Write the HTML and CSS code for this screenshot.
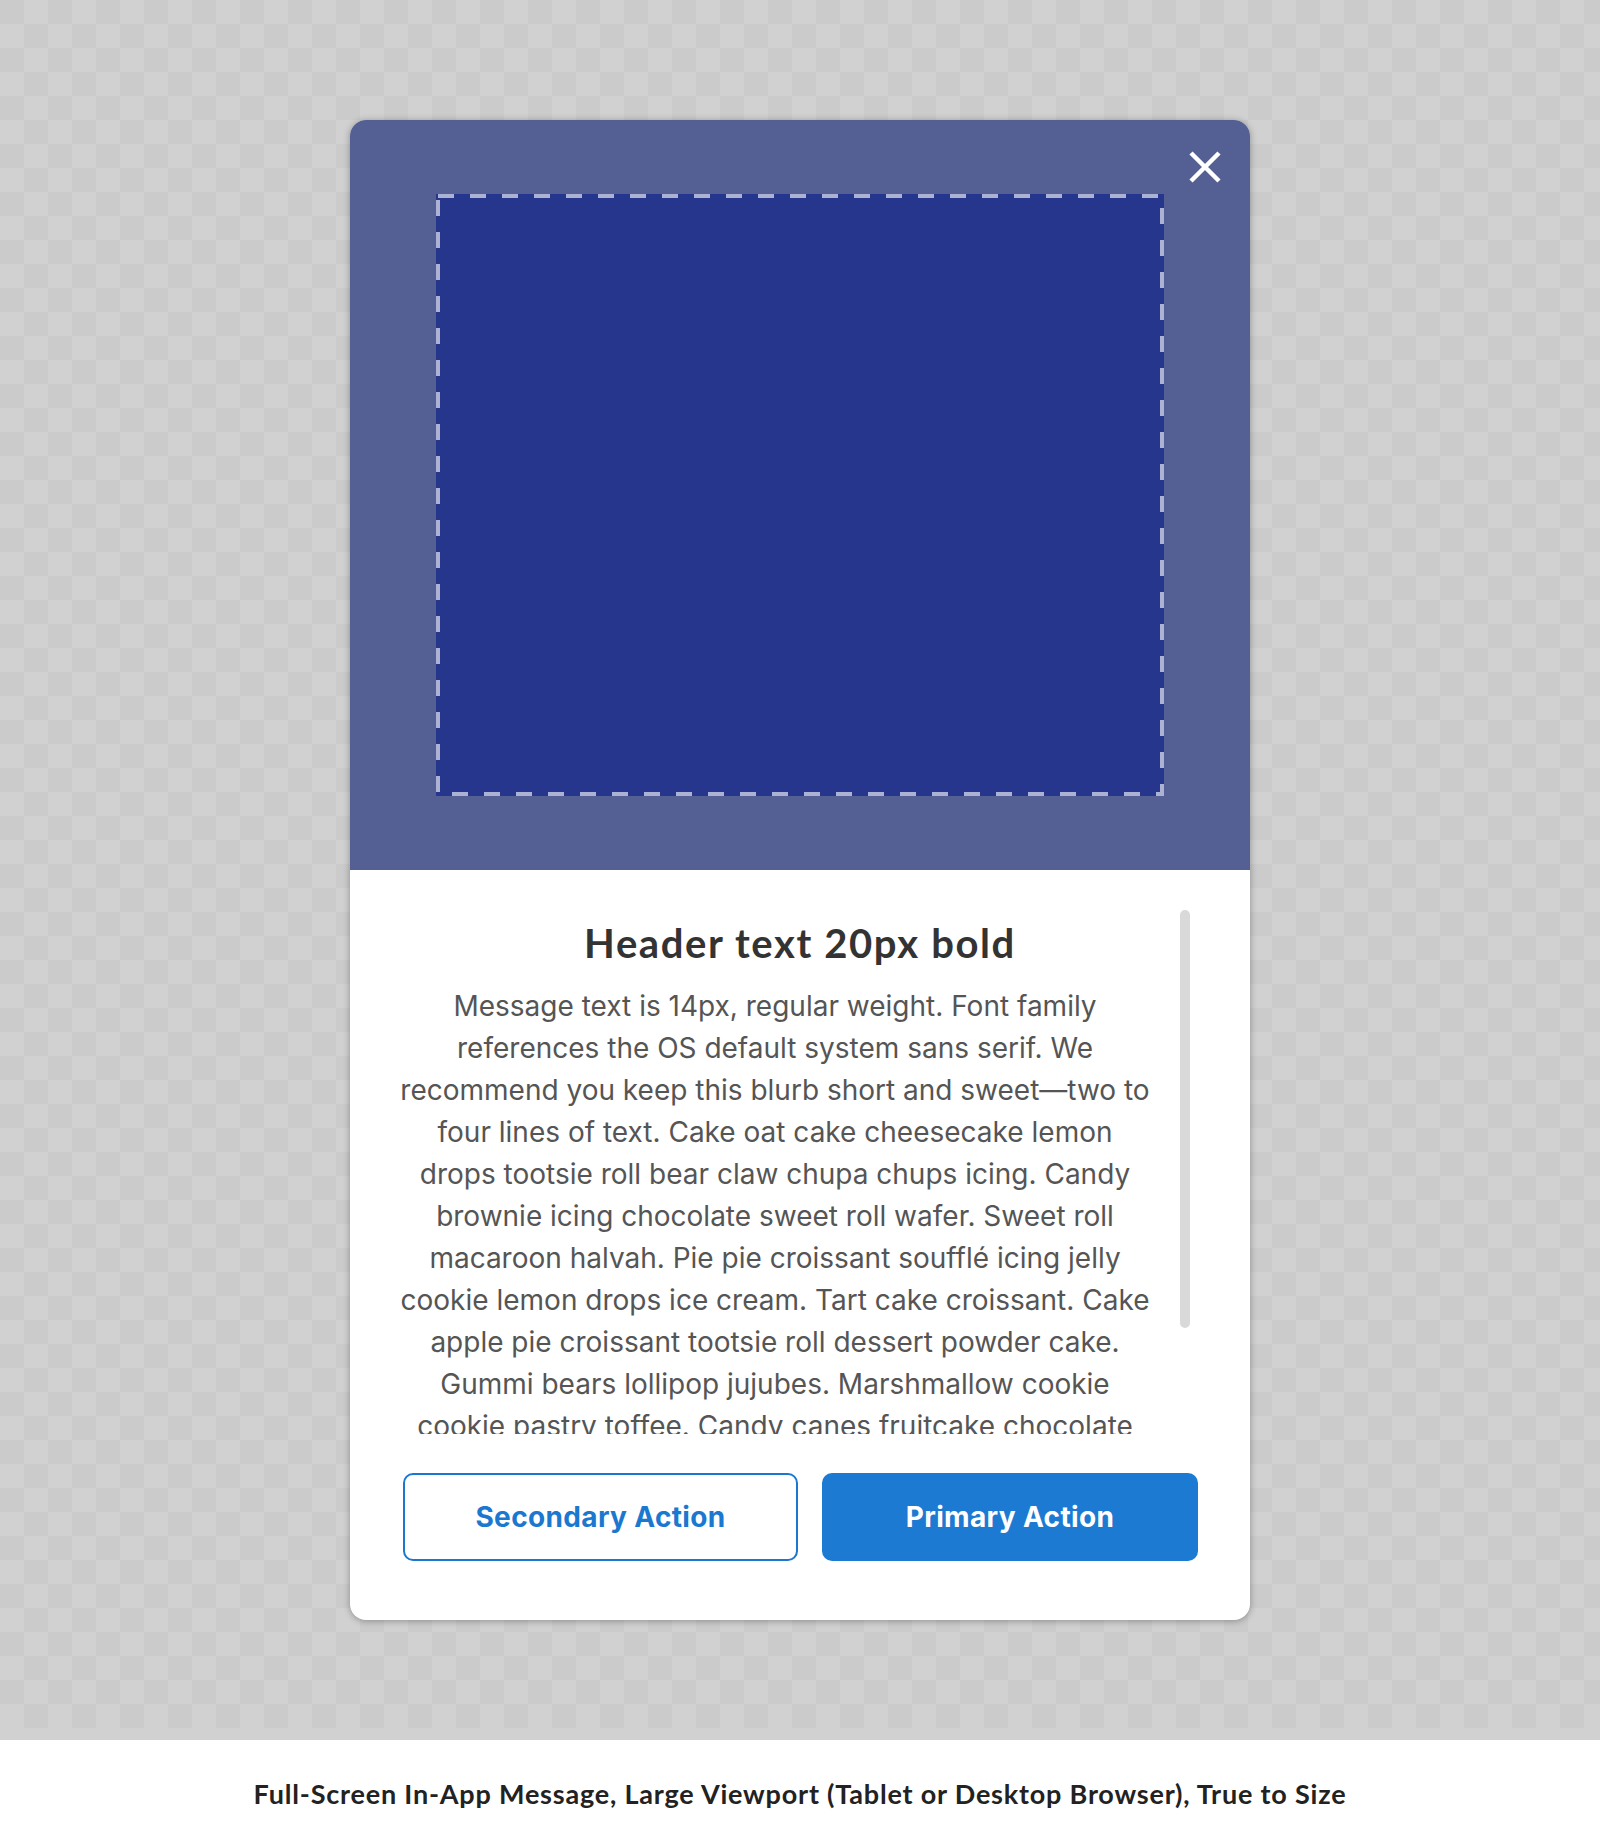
FILE: index.html
```html
<!DOCTYPE html>
<html lang="en">
<head>
<meta charset="utf-8">
<title>Full-Screen In-App Message</title>
<link rel="stylesheet" href="styles.css">
</head>
<body>
<div class="stage">
  <div class="card">
    <div class="hero">
      <button class="close" aria-label="Close">
        <svg width="32" height="32" viewBox="0 0 32 32"><path d="M2 2 L30 30 M30 2 L2 30" stroke="#fff" stroke-width="4.5" fill="none"/></svg>
      </button>
      <div class="image-slot">
        <svg class="dash" width="728" height="602" viewBox="0 0 728 602"><rect x="2" y="2" width="724" height="598" fill="none" stroke="rgba(255,255,255,0.62)" stroke-width="4" stroke-dasharray="16 16"/></svg>
      </div>
    </div>
    <div class="content">
      <div class="scroll">
        <h1 class="title">Header text 20px bold</h1>
        <p class="message">Message text is 14px, regular weight. Font family<br>references the OS default system sans serif. We<br>recommend you keep this blurb short and sweet—two to<br>four lines of text. Cake oat cake cheesecake lemon<br>drops tootsie roll bear claw chupa chups icing. Candy<br>brownie icing chocolate sweet roll wafer. Sweet roll<br>macaroon halvah. Pie pie croissant soufflé icing jelly<br>cookie lemon drops ice cream. Tart cake croissant. Cake<br>apple pie croissant tootsie roll dessert powder cake.<br>Gummi bears lollipop jujubes. Marshmallow cookie<br>cookie pastry toffee. Candy canes fruitcake chocolate<br>cake gummies muffin sesame snaps.</p>
        <div class="thumb"></div>
      </div>
      <div class="actions">
        <button class="btn btn-secondary">Secondary Action</button>
        <button class="btn btn-primary">Primary Action</button>
      </div>
    </div>
  </div>
</div>
<footer class="caption">Full-Screen In-App Message, Large Viewport (Tablet or Desktop Browser), True to Size</footer>
</body>
</html>
```

FILE: styles.css
```css
* { box-sizing: border-box; }

html, body {
  margin: 0;
  padding: 0;
  background: #ffffff;
}

.stage {
  height: 1740px;
  padding-top: 120px;
  background:
    linear-gradient(#d1d1d1, #d1d1d1) left bottom / 100% 12px no-repeat,
    conic-gradient(#d1d1d1 25%, #cbcbcb 0 50%, #d1d1d1 0 75%, #cbcbcb 0) 0 0 / 48px 48px;
}

.card {
  position: relative;
  width: 900px;
  height: 1500px;
  margin-left: 350px;
  border-radius: 16px;
  background: #ffffff;
  box-shadow: 0 1px 7px rgba(0, 0, 0, 0.32);
  overflow: hidden;
}

.hero {
  position: relative;
  height: 750px;
  background: #545f93;
  display: flex;
  align-items: center;
  justify-content: center;
}

.close {
  position: absolute;
  top: 31px;
  right: 29px;
  width: 32px;
  height: 32px;
  padding: 0;
  border: 0;
  background: transparent;
  display: block;
}
.close svg { display: block; }

.image-slot {
  width: 728px;
  height: 602px;
  background: #26368c;
}
.image-slot .dash { display: block; }

.content {
  padding-top: 40px;
  padding-bottom: 59px;
}

.scroll {
  position: relative;
  height: 524px;
  overflow: hidden;
  padding-top: 8.5px;
}

.title {
  margin: 0 0 18px;
  font-family: Lato, "Open Sans", sans-serif;
  font-weight: 700;
  font-size: 40px;
  line-height: 48px;
  letter-spacing: 1.6px;
  color: #333333;
  text-align: center;
}

.message {
  margin: 0 80px 0 30px;
  font-family: Inter, "Noto Sans", sans-serif;
  font-size: 28px;
  line-height: 42px;
  color: #555555;
  text-align: center;
  white-space: nowrap;
}

.thumb {
  position: absolute;
  top: 0;
  left: 830px;
  width: 10px;
  height: 418px;
  border-radius: 5px;
  background: #d9d9d9;
}

.actions {
  display: flex;
  gap: 24px;
  margin-top: 39px;
  padding-left: 53px;
}

.btn {
  height: 88px;
  border-radius: 10px;
  font-family: Inter, "Noto Sans", sans-serif;
  font-weight: 700;
  font-size: 28px;
  letter-spacing: 0.35px;
  cursor: pointer;
}

.btn-secondary {
  width: 395px;
  background: #ffffff;
  color: #1b78d0;
  border: 2px solid #1b78d0;
}

.btn-primary {
  width: 376px;
  background: #1c7ad3;
  color: #ffffff;
  border: 0;
}

.caption {
  height: 88px;
  padding-top: 38px;
  font-family: Lato, "Open Sans", sans-serif;
  font-weight: 700;
  font-size: 27px;
  line-height: 32px;
  letter-spacing: 0.8px;
  color: #222222;
  text-align: center;
}
```
